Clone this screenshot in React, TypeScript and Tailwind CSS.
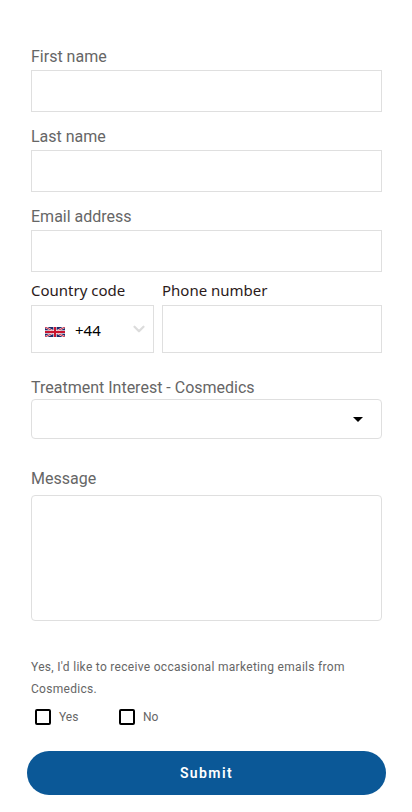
import { ChevronDown } from "lucide-react";

function TextField({ id, label, type = "text" }: { id: string; label: string; type?: string }) {
  return (
    <div className="flex flex-col gap-[3px]">
      <label htmlFor={id} className="text-base leading-5">
        {label}
      </label>
      <input id={id} type={type} className="h-[42px] w-full border border-[#dfdfdf] bg-white px-3 outline-none" />
    </div>
  );
}

function Choice({ id, label }: { id: string; label: string }) {
  return (
    <div className="flex w-[84px] items-center gap-2">
      <input
        id={id}
        type="checkbox"
        className="size-4 appearance-none rounded-xs border-2 border-black bg-white checked:bg-black"
      />
      <label htmlFor={id} className="text-xs leading-4">
        {label}
      </label>
    </div>
  );
}

function UnionFlag() {
  return (
    <svg viewBox="0 0 60 30" width="20" height="10" preserveAspectRatio="none" aria-hidden="true">
      <path fill="#1f2a6b" d="M0 0h60v30H0z" />
      <path stroke="#fff" strokeWidth="6" d="M0 0l60 30M60 0L0 30" />
      <path stroke="#c8142f" strokeWidth="3" d="M0 0l60 30M60 0L0 30" />
      <path stroke="#f3dfe6" strokeWidth="10" d="M30 0v30M0 15h60" />
      <path stroke="#c8142f" strokeWidth="6" d="M30 0v30M0 15h60" />
    </svg>
  );
}

export default function App() {
  return (
    <main className="min-h-screen bg-white pt-[47px] pr-[26px] pb-4 pl-[27px] font-[Roboto,sans-serif] text-[#666666]">
      <form onSubmit={(e) => e.preventDefault()}>
        <div className="flex flex-col px-1">
          <div className="flex flex-col gap-[15px]">
            <TextField id="first-name" label="First name" />
            <TextField id="last-name" label="Last name" />
            <TextField id="email" label="Email address" type="email" />
          </div>

          <div className="mt-2 flex gap-2 font-['Noto_Sans',sans-serif] text-[#2b1a1a]">
            <div className="flex w-[123px] flex-col gap-[5px]">
              <label htmlFor="country" className="text-[15px] leading-5">
                Country code
              </label>
              <div className="relative">
                <select
                  id="country"
                  className="block h-12 w-full appearance-none border border-[#dfdfdf] bg-white pt-[2px] pl-[43px] text-[15px] text-black outline-none"
                >
                  <option>+44</option>
                </select>
                <span className="pointer-events-none absolute inset-y-0 left-[14px] flex items-center pt-[6px]">
                  <UnionFlag />
                </span>
                <span className="pointer-events-none absolute inset-y-0 right-[6px] flex items-center text-[#dcdcdc]">
                  <ChevronDown size={18} strokeWidth={3} />
                </span>
              </div>
            </div>
            <div className="flex min-w-0 flex-1 flex-col gap-[5px]">
              <label htmlFor="phone" className="text-[15px] leading-5">
                Phone number
              </label>
              <input id="phone" type="tel" className="h-12 w-full border border-[#dfdfdf] bg-white px-3 outline-none" />
            </div>
          </div>

          <div className="mt-[25px] flex flex-col gap-px">
            <label htmlFor="treatment" className="text-base leading-5">
              Treatment Interest - Cosmedics
            </label>
            <div className="relative">
              <select
                id="treatment"
                className="block h-10 w-full appearance-none rounded-sm border border-[#dfdfdf] bg-white px-3 outline-none"
              >
                <option></option>
              </select>
              <span className="pointer-events-none absolute inset-y-0 right-[19px] flex items-center">
                <svg viewBox="0 0 10 5" width="10" height="5" aria-hidden="true">
                  <path d="M0 0h10L5 5z" fill="#000" />
                </svg>
              </span>
            </div>
          </div>

          <div className="mt-[30px] flex flex-col gap-[6px]">
            <label htmlFor="message" className="text-base leading-5">
              Message
            </label>
            <textarea
              id="message"
              className="h-[126px] w-full resize-none rounded-sm border border-[#dfdfdf] bg-white p-3 outline-none"
            />
          </div>

          <fieldset className="mt-[35px]">
            <legend className="text-xs leading-[22px] tracking-wide">
              Yes, I'd like to receive occasional marketing emails from Cosmedics.
            </legend>
            <div className="flex pt-[9px] pl-1">
              <Choice id="marketing-yes" label="Yes" />
              <Choice id="marketing-no" label="No" />
            </div>
          </fieldset>
        </div>

        <button
          type="submit"
          className="mt-[26px] h-11 w-full rounded-full bg-[#0b5897] text-sm font-semibold tracking-widest text-white"
        >
          Submit
        </button>
      </form>
    </main>
  );
}
